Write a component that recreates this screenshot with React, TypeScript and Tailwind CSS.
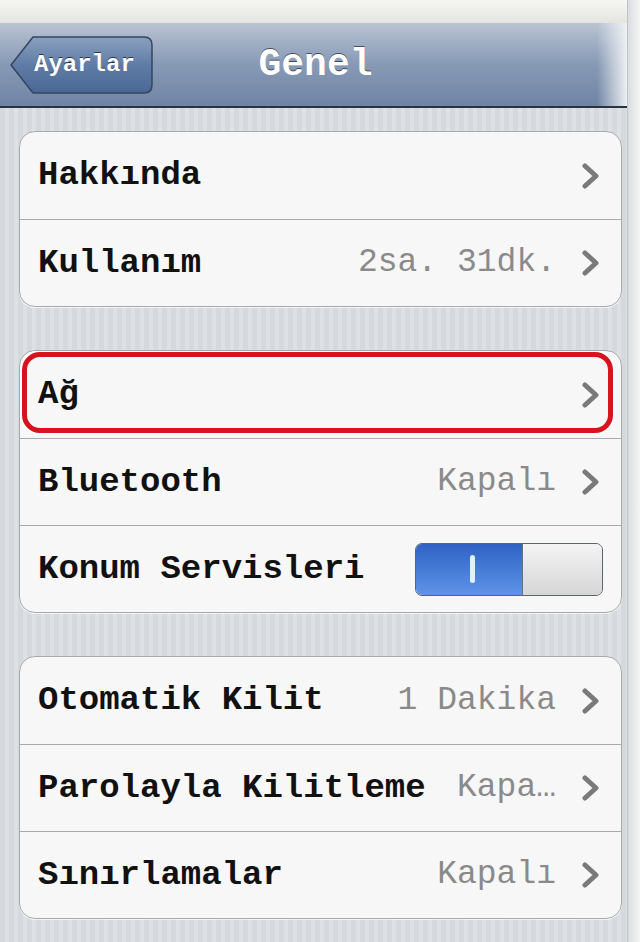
import React from "react";

type Row = {
  label: string;
  value?: string;
  chevron?: boolean;
  toggle?: boolean;
  highlight?: boolean;
};

const groups: Row[][] = [
  [
    { label: "Hakkında", chevron: true },
    { label: "Kullanım", value: "2sa. 31dk.", chevron: true },
  ],
  [
    { label: "Ağ", chevron: true, highlight: true },
    { label: "Bluetooth", value: "Kapalı", chevron: true },
    { label: "Konum Servisleri", toggle: true },
  ],
  [
    { label: "Otomatik Kilit", value: "1 Dakika", chevron: true },
    { label: "Parolayla Kilitleme", value: "Kapa…", chevron: true },
    { label: "Sınırlamalar", value: "Kapalı", chevron: true },
  ],
];

const mono = "font-['Courier_New','Liberation_Mono',monospace]";

const Chevron = () => (
  <svg width="18" height="26" viewBox="0 0 18 26" className="shrink-0">
    <path
      d="M3 3 L14 13 L3 23"
      fill="none"
      stroke="#7a7a7a"
      strokeWidth="5"
      strokeLinecap="round"
      strokeLinejoin="round"
    />
  </svg>
);

const Toggle = () => (
  <div className="flex h-[53px] w-[188px] overflow-hidden rounded-[7px] border border-[#5d6470] shadow-[inset_0_1px_2px_rgba(0,0,0,0.3)]">
    <div className="flex w-[106px] items-center justify-center bg-gradient-to-b from-[#2f62c4] to-[#5f94e8]">
      <div className="ml-[6px] h-[28px] w-[5px] rounded-sm bg-[#dff0ff]" />
    </div>
    <div className="flex-1 border-l border-[#6a6f78] bg-gradient-to-b from-[#f4f4f4] to-[#d6d6d6]" />
  </div>
);

const SettingsRow = ({ row, first }: { row: Row; first: boolean }) => (
  <div
    className={`relative flex h-[87px] items-center pl-[18px] pr-[21px] ${
      first ? "" : "border-t border-[#ababab]"
    }`}
  >
    <span className={`${mono} text-[34px] font-bold text-[#111] whitespace-pre`}>
      {row.label}
    </span>
    <div className="flex-1" />
    {row.value && (
      <span className={`${mono} mr-[26px] text-[33px] text-[#8a8a8a] whitespace-pre`}>
        {row.value}
      </span>
    )}
    {row.chevron && <Chevron />}
    {row.toggle && (
      <div className="mr-[-3px]">
        <Toggle />
      </div>
    )}
    {row.highlight && (
      <div className="pointer-events-none absolute left-[2px] right-[8px] top-[1px] bottom-[5px] rounded-[18px] border-[5px] border-[#d7141d] shadow-[0_0_0_2px_rgba(255,255,255,0.8)]" />
    )}
  </div>
);

const BackButton = () => (
  <div className="relative flex h-[58px] w-[143px] items-center">
    <svg
      width="143"
      height="58"
      viewBox="0 0 143 58"
      className="absolute inset-0"
    >
      <defs>
        <linearGradient id="bb" x1="0" y1="0" x2="0" y2="1">
          <stop offset="0" stopColor="#8aa0c0" />
          <stop offset="0.5" stopColor="#5f7ca6" />
          <stop offset="1" stopColor="#4a6894" />
        </linearGradient>
      </defs>
      <path
        d="M23 1 L134 1 Q142 1 142 9 L142 49 Q142 57 134 57 L23 57 L1 29 Z"
        fill="url(#bb)"
        stroke="#34465f"
        strokeWidth="1.5"
      />
    </svg>
    <span
      className={`${mono} relative ml-[24px] text-[24px] font-bold text-white [text-shadow:0_-1px_0_rgba(0,0,0,0.6)]`}
    >
      Ayarlar
    </span>
  </div>
);

export default function App() {
  return (
    <div className="flex h-[942px] w-[640px] overflow-hidden bg-[#f3f3f1]">
      <div className="flex w-[627px] flex-col">
        <div className="h-[23px] bg-gradient-to-b from-[#f6f6f4] to-[#e4e4df]" />
        <div className="relative flex h-[85px] items-center border-b-2 border-[#2a3340] bg-gradient-to-b from-[#b9c4d3] via-[#8799b5] to-[#6f85a5] pl-[10px]">
          <BackButton />
          <div className="absolute inset-0 flex items-center justify-center pointer-events-none">
            <span
              className={`${mono} ml-[4px] text-[38px] font-bold text-white [text-shadow:0_-1px_0_rgba(0,0,0,0.55)]`}
            >
              Genel
            </span>
          </div>
          <div className="pointer-events-none absolute right-0 top-0 h-full w-[30px] bg-gradient-to-r from-transparent to-[#eef0f3]" />
        </div>
        <div className="flex flex-1 flex-col gap-[43px] bg-[repeating-linear-gradient(90deg,#d5d9de_0px,#d5d9de_5px,#dde0e4_5px,#dde0e4_9px)] pl-[19px] pr-[5px] pt-[23px]">
          {groups.map((g, gi) => (
            <div
              key={gi}
              className="overflow-hidden rounded-[16px] border border-[#a9a9a9] bg-[#f7f7f7] shadow-[0_1px_0_rgba(255,255,255,0.7)]"
            >
              {g.map((row, ri) => (
                <SettingsRow key={ri} row={row} first={ri === 0} />
              ))}
            </div>
          ))}
        </div>
      </div>
      <div className="flex-1 border-l border-[#c0c4c8] bg-gradient-to-r from-[#dadde0] to-[#f5f5f4]" />
    </div>
  );
}
